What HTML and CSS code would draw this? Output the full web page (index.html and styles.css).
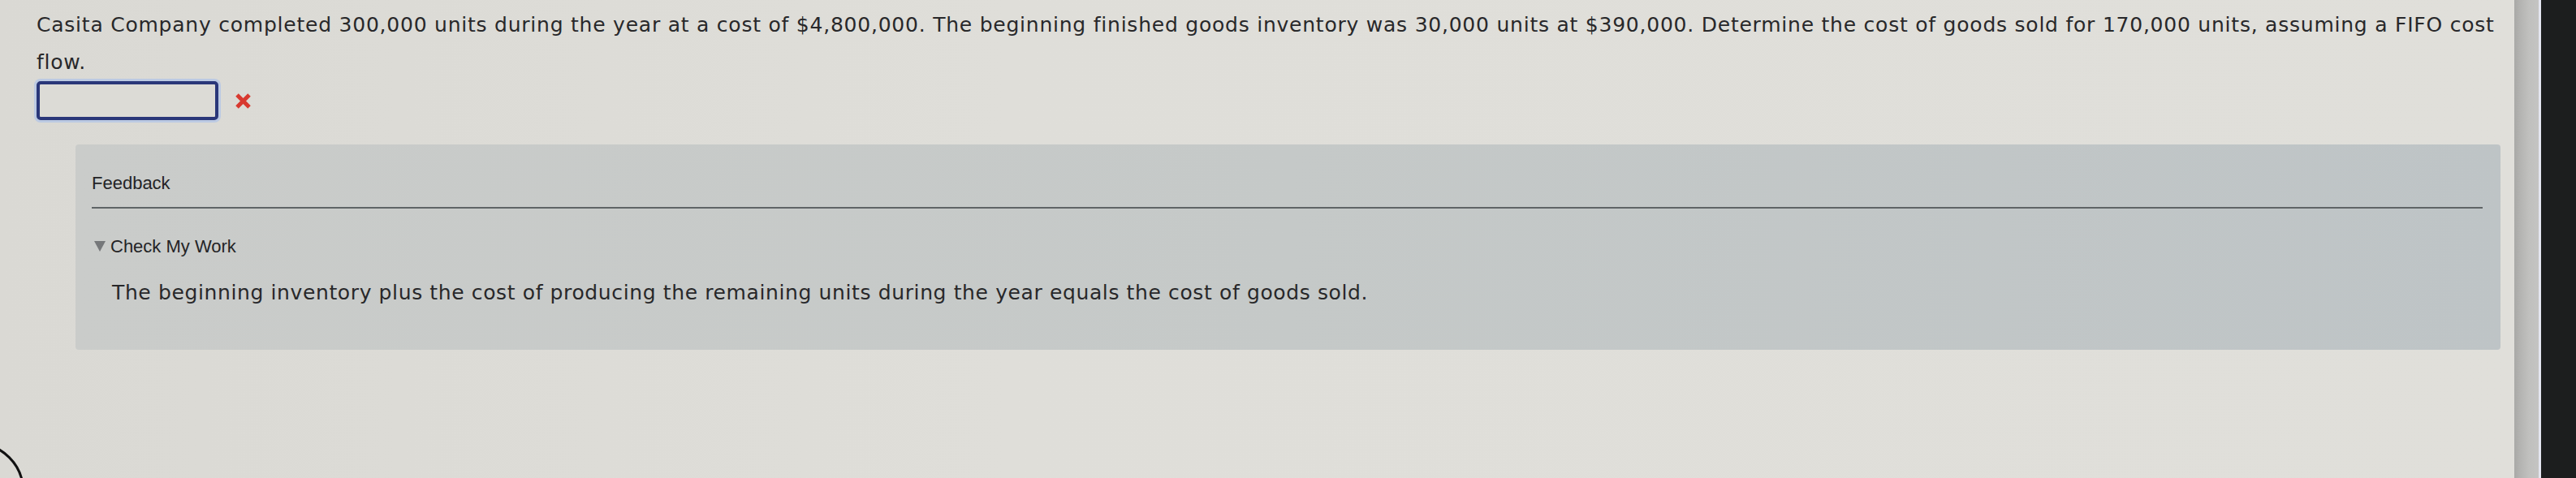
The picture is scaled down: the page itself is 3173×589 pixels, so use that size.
FILE: index.html
```html
<!DOCTYPE html>
<html lang="en">
<head>
<meta charset="utf-8">
<title>Check My Work</title>
<link rel="stylesheet" href="styles.css">
</head>
<body>
<div class="screen">
  <div class="page">
    <p class="question">Casita Company completed 300,000 units during the year at a cost of $4,800,000. The beginning finished goods inventory was 30,000 units at $390,000. Determine the cost of goods sold for 170,000 units, assuming a FIFO cost flow.</p>
    <div class="answer-row">
      <div class="answer-input"></div>
      <svg class="wrong-mark" width="21" height="21" viewBox="0 0 21 21" aria-label="incorrect">
        <path d="M3 3 L18 18 M18 3 L3 18" stroke="#d8392f" stroke-width="5" stroke-linecap="butt"/>
      </svg>
    </div>
    <section class="feedback">
      <div class="feedback-title">Feedback</div>
      <div class="feedback-rule"></div>
      <div class="check-row">
        <svg class="caret" width="14" height="13" viewBox="0 0 14 13"><path d="M0 0 H14 L7 13 Z" fill="#76787a"/></svg>
        <span>Check My Work</span>
      </div>
      <p class="explanation">The beginning inventory plus the cost of producing the remaining units during the year equals the cost of goods sold.</p>
    </section>
    <div class="arc"></div>
  </div>
  <div class="scroll-strip"></div>
  <div class="edge-line"></div>
  <div class="bezel"></div>
</div>
</body>
</html>
```

FILE: styles.css
```css
html, body {
  margin: 0;
  padding: 0;
}

body {
  background: #1c1e1e;
}

.screen {
  display: flex;
  width: 3173px;
  height: 589px;
  overflow: hidden;
}

.page {
  position: relative;
  flex: 0 0 3097px;
  box-sizing: border-box;
  padding: 8px 0 0 45px;
  background: linear-gradient(90deg, #dad9d4 0%, #dfded9 40%, #e0dfda 100%);
  color: #28282a;
}

.question {
  margin: 0;
  width: 3045px;
  font-family: "DejaVu Sans", Verdana, sans-serif;
  font-size: 25px;
  letter-spacing: 0.77px;
  line-height: 46px;
}

.answer-row {
  display: flex;
  align-items: center;
  gap: 20px;
  margin-top: 0;
}

.answer-input {
  box-sizing: border-box;
  width: 224px;
  height: 48px;
  border: 4px solid #2a3779;
  border-radius: 5px;
  background: #dcdbd6;
  box-shadow: 0 0 0 3px rgba(175, 195, 232, 0.7);
}

.wrong-mark {
  display: block;
}

.feedback {
  box-sizing: border-box;
  width: 2987px;
  margin: 30px 0 0 48px;
  padding: 36px 22px 55px 20px;
  border-radius: 4px;
  background: linear-gradient(90deg, #caccca 0%, #c5c9c8 50%, #bec4c6 100%);
}

.feedback-title {
  font-family: "Liberation Sans", Arial, sans-serif;
  font-size: 22px;
  line-height: 24px;
  color: #242426;
}

.feedback-rule {
  height: 2px;
  margin-top: 17px;
  background: #5f6466;
}

.check-row {
  display: flex;
  align-items: center;
  gap: 6px;
  margin-top: 35px;
  padding-left: 3px;
  font-family: "Liberation Sans", Arial, sans-serif;
  font-size: 22px;
  line-height: 24px;
  color: #242426;
}

.caret {
  display: block;
  margin-top: -2px;
}

.explanation {
  margin: 30px 0 0 25px;
  font-family: "DejaVu Sans", Verdana, sans-serif;
  font-size: 25px;
  letter-spacing: 0.62px;
  line-height: 30px;
  color: #28282a;
}

.arc {
  position: absolute;
  left: -90px;
  top: 545px;
  width: 114px;
  height: 114px;
  border: 3px solid #111;
  border-radius: 50%;
}

.scroll-strip {
  flex: 0 0 30px;
  background: linear-gradient(90deg, #a9a9a7 0%, #b4b4b2 25%, #c0c0be 60%, #c4c4c2 100%);
}

.edge-line {
  flex: 0 0 3px;
  background: #e4e6f0;
}

.bezel {
  flex: 1 1 auto;
  background: #1c1e1e;
}
```
